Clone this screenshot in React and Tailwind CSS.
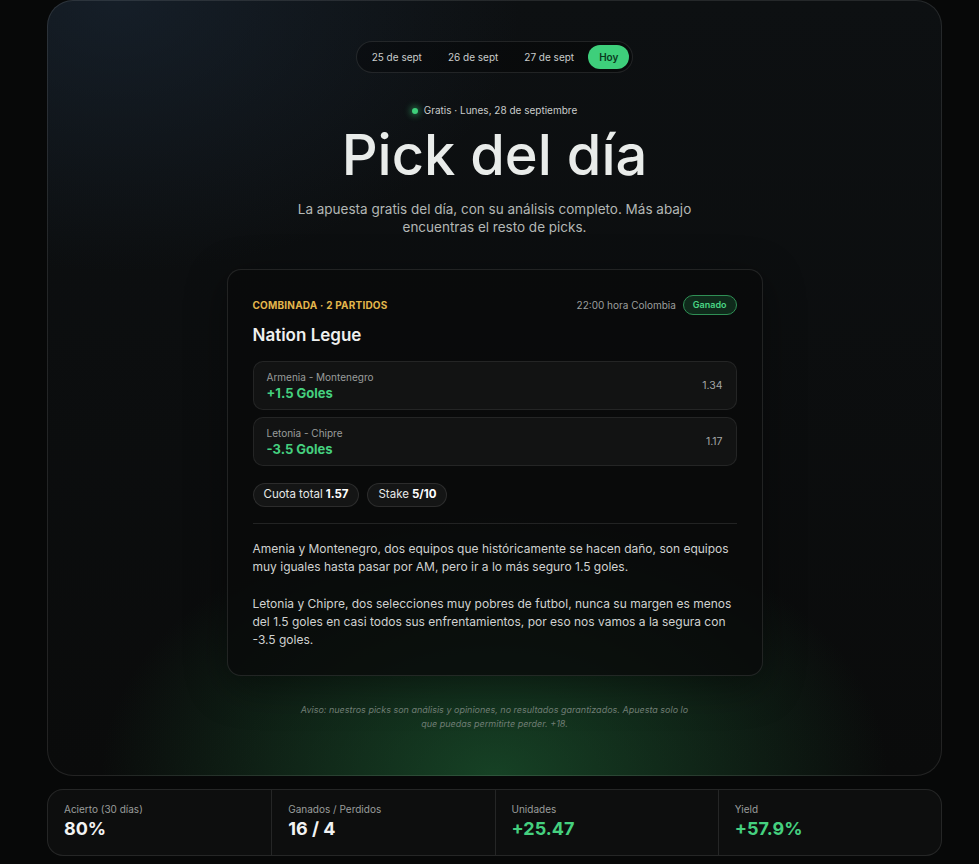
import React from 'react'

const legs = [
    { match: 'Armenia - Montenegro', pick: '+1.5 Goles', odd: '1.34' },
    { match: 'Letonia - Chipre', pick: '-3.5 Goles', odd: '1.17' },
];

const stats = [
    { label: 'Acierto (30 días)', value: '80%', green: false },
    { label: 'Ganados / Perdidos', value: '16 / 4', green: false },
    { label: 'Unidades', value: '+25.47', green: true },
    { label: 'Yield', value: '+57.9%', green: true },
];

function DateTabs() {
    const days = ['25 de sept', '26 de sept', '27 de sept'];
    return (
        <div className="flex items-center gap-[2px] rounded-full border border-white/10 bg-black/30 p-[3px]">
            {days.map(d => (
                <button key={d} className="h-[24px] rounded-full px-[12px] text-[10px] text-[#c9cccb]">
                    {d}
                </button>
            ))}
            <button className="h-[24px] rounded-full bg-[#3ecf7b] px-[11px] text-[10px] font-semibold text-[#0a3a1e]">
                Hoy
            </button>
        </div>
    );
}

function PickCard() {
    return (
        <div className="w-[536px] rounded-[14px] border border-white/10 bg-[#090a0a]/80 px-[25px] pb-[26px] pt-[25px] shadow-[0_10px_40px_rgba(0,0,0,0.4)]">
            <div className="flex h-[20px] items-center justify-between">
                <span className="text-[10px] font-bold uppercase tracking-[0.02em] text-[#e3b64c]">
                    Combinada · 2 partidos
                </span>
                <div className="flex items-center gap-[7px]">
                    <span className="text-[10px] text-[#9c9f9e]">22:00 hora Colombia</span>
                    <span className="flex h-[20px] items-center rounded-full border border-[#2f8f55] bg-[#0f2a1b] px-[9px] text-[9px] font-semibold text-[#4ad585]">
                        Ganado
                    </span>
                </div>
            </div>

            <h2 className="mt-[8px] text-[17px] font-semibold leading-[24px] text-[#eef0ef]">Nation Legue</h2>

            <div className="mt-[14px] flex flex-col gap-[7px]">
                {legs.map(l => (
                    <div key={l.match} className="flex h-[49px] items-center justify-between rounded-[10px] border border-white/[0.08] bg-[#121313] px-[13px]">
                        <div className="flex flex-col">
                            <span className="text-[10px] leading-[14px] text-[#9a9d9c]">{l.match}</span>
                            <span className="text-[13px] font-bold leading-[18px] text-[#45d07f]">{l.pick}</span>
                        </div>
                        <span className="text-[10.5px] text-[#a3a6a5]">{l.odd}</span>
                    </div>
                ))}
            </div>

            <div className="mt-[17px] flex gap-[8px]">
                <span className="flex h-[24px] items-center gap-[3px] rounded-full border border-white/10 bg-[#141515] px-[10px] text-[11.5px] text-[#e6e8e7]">
                    Cuota total <b className="font-bold text-white">1.57</b>
                </span>
                <span className="flex h-[24px] items-center gap-[3px] rounded-full border border-white/10 bg-[#141515] px-[10px] text-[11.5px] text-[#e6e8e7]">
                    Stake <b className="font-bold text-white">5/10</b>
                </span>
            </div>

            <div className="mt-[16px] border-t border-white/10" />

            <div className="mt-[16px] flex flex-col gap-[19px] text-[12px] leading-[18px] text-[#d0d2d1]">
                <p>
                    Amenia y Montenegro, dos equipos que históricamente se hacen daño, son equipos muy iguales hasta pasar por AM, pero ir a lo más seguro 1.5 goles.
                </p>
                <p>
                    Letonia y Chipre, dos selecciones muy pobres de futbol, nunca su margen es menos del 1.5 goles en casi todos sus enfrentamientos, por eso nos vamos a la segura con -3.5 goles.
                </p>
            </div>
        </div>
    );
}

export default function App() {
    return (
        <div className="min-h-[864px] bg-[#070808] pl-[47px] font-['Inter',sans-serif]">
            <section className="flex h-[776px] w-[895px] flex-col items-center rounded-[26px] border border-white/10 bg-[radial-gradient(ellipse_44%_34%_at_50%_100%,rgba(32,110,58,0.55),transparent_100%),radial-gradient(ellipse_45%_35%_at_8%_0%,rgba(28,42,58,0.55),transparent_100%),linear-gradient(180deg,#0d1012,#0a0b0b)] bg-origin-border bg-no-repeat pt-[40px]">
                <DateTabs />

                <div className="mt-[30px] flex items-center gap-[6px] text-[10px] text-[#c9cccb]">
                    <span className="h-[6px] w-[6px] rounded-full bg-[#3ecf7b] shadow-[0_0_6px_2px_rgba(62,207,123,0.45)]" />
                    Gratis · Lunes, 28 de septiembre
                </div>

                <h1 className="mt-[5px] text-[56px] font-medium leading-[64px] text-[#e9ecea]">
                    Pick del día
                </h1>

                <p className="mt-[13px] w-[420px] text-center text-[13.5px] leading-[18px] text-[#b3b7b5]">
                    La apuesta gratis del día, con su análisis completo. Más abajo encuentras el resto de picks.
                </p>

                <div className="mt-[33px]">
                    <PickCard />
                </div>

                <p className="mt-[27px] w-[400px] text-center text-[9px] italic leading-[14px] text-[#6f7d74]">
                    Aviso: nuestros picks son análisis y opiniones, no resultados garantizados. Apuesta solo lo que puedas permitirte perder. +18.
                </p>
            </section>

            <div className="mt-[13px] grid w-[895px] grid-cols-4 rounded-[16px] border border-white/10 bg-[#0d0e0e]">
                {stats.map((s, i) => (
                    <div key={s.label} className={`flex h-[65px] flex-col justify-center px-[16px] pb-[2px] ${i > 0 ? 'border-l border-white/10' : ''}`}>
                        <span className="text-[10px] text-[#9a9d9c]">{s.label}</span>
                        <span className={`text-[18px] font-bold leading-[24px] ${s.green ? 'text-[#45d07f]' : 'text-[#f2f3f3]'}`}>
                            {s.value}
                        </span>
                    </div>
                ))}
            </div>
        </div>
    );
}
